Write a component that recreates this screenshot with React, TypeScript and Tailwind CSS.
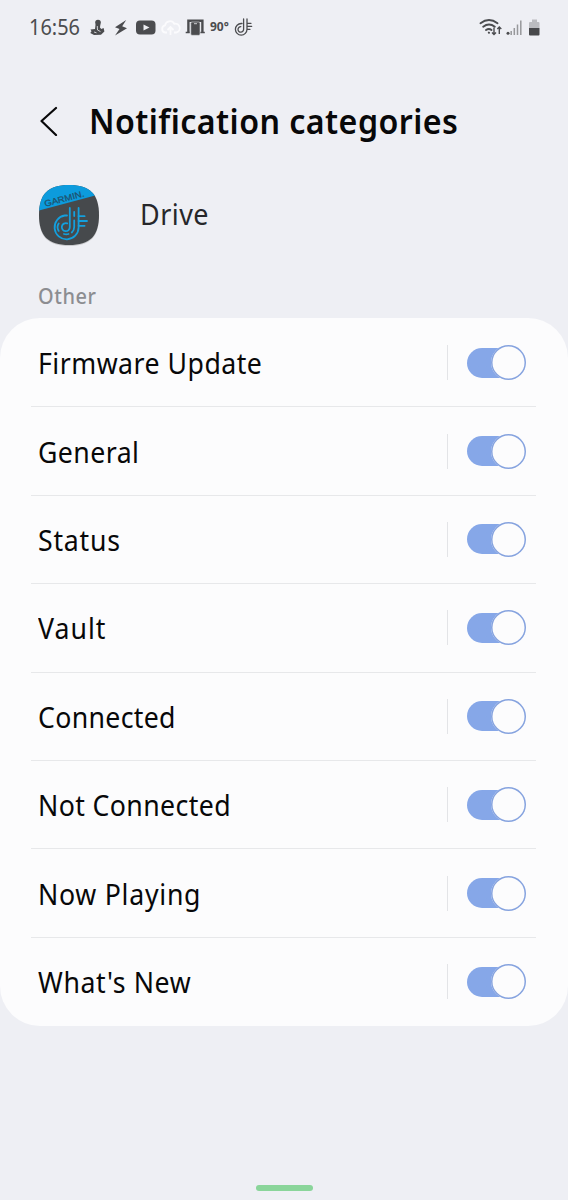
import React from "react";

const categories = [
  { name: "Firmware Update", tracking: "tracking-[0.53px]" },
  { name: "General", tracking: "tracking-[0.48px]" },
  { name: "Status", tracking: "tracking-[0.85px]" },
  { name: "Vault", tracking: "tracking-[1.1px]" },
  { name: "Connected", tracking: "tracking-[0.35px]" },
  { name: "Not Connected", tracking: "tracking-[0.42px]" },
  { name: "Now Playing", tracking: "tracking-[0.8px]" },
  { name: "What's New", tracking: "tracking-[0.67px]" },
];

function NotificationIcons() {
  return (
    <svg width="119" height="24" viewBox="0 0 119 24" fill="none" className="ml-[5px] shrink-0">
      {/* figure */}
      <g fill="#4b4c4f">
        <circle cx="11" cy="7.5" r="2.8" />
        <path d="M8.6 9 13.4 9 13 12.6 14.3 14 16.6 13 17.4 16.5 14 19.7 7 20 3.3 18 4.5 16.2 3.5 14.4 8 14Z" />
      </g>
      <path d="m10.3 11 .2 4 3 1.6M7 17l2.5.8" stroke="#eeeff3" strokeWidth=".8" />
      {/* bolt */}
      <path d="M39.2 5 28 12.2 32.5 14 28 20.5 40 13.2 35.2 11.2Z" fill="#4b4c4f" />
      {/* video */}
      <rect x="49" y="5.5" width="19.5" height="14" rx="4" fill="#4b4c4f" />
      <path d="m56.5 9.5 6 3-6 3Z" fill="#eeeff3" />
      {/* cloud upload */}
      <path d="M80 17.5H78a3.7 3.7 0 0 1 0-7.2 5 5 0 0 1 9.3-1.5 4.4 4.4 0 0 1 2 8.7H87M83.5 20V12m-3 3 3-3 3 3" stroke="#fbfbfd" strokeWidth="1.8" />
      {/* docked phone */}
      <path d="M101.4 17.5V5.7h14v11.8" stroke="#4b4c4f" strokeWidth="2.4" />
      <path d="M98.7 17.6h4m10.5 0h4.6" stroke="#4b4c4f" strokeWidth="1.5" />
      <rect x="103.8" y="7" width="9.2" height="13.3" rx="1.2" fill="#4b4c4f" stroke="#d9dade" strokeWidth=".6" />
      <path d="M107 8.7h3" stroke="#eeeff3" strokeWidth=".8" />
    </svg>
  );
}

function StatusDriveIcon() {
  return (
    <svg width="19" height="22" viewBox="0 0 19 22" fill="none" stroke="#4b4c4f" strokeWidth="1.3" strokeLinecap="round">
      <path d="M8 7.5H7.2a5.8 5.8 0 1 0 5.8 5.8V3M9.6 3v10.3a2.8 2.8 0 1 1-2.8-2.7M13 7.3h4M13 10.3h4.7M13 13.3H16" />
    </svg>
  );
}

function SystemIcons() {
  return (
    <svg width="64" height="24" viewBox="0 0 64 24" fill="none">
      <g stroke="#4b4c4f" strokeWidth="2" strokeLinecap="round">
        <path d="M1.5 8.2q8.5-6.2 17 0M4.2 11.7q5.8-4.5 11.6 0M7 15q3-2 5.5 0" />
        <path d="m9.8 17.6.2.2" />
      </g>
      <path d="M15 12.5v7m-2-2 2 2 2-2M20.3 19v-7m-2 2 2-2 2 2" stroke="#4b4c4f" strokeWidth="1.4" />
      <circle cx="29" cy="18.3" r="1.5" fill="#4b4c4f" />
      <path d="M32.2 16v4M35.3 13v7M38.5 9.5v10.5M41.8 5.5v14.5" stroke="#97989b" strokeWidth="1.5" />
      <path d="M51 7h2V4.5h5V7h1.5q1 0 1 1v5H50V8q0-1 1-1Z" fill="#bbbcc0" />
      <path d="M50 13h10.5v6.5q0 1-1 1H51q-1 0-1-1Z" fill="#47484b" />
    </svg>
  );
}

function AppIcon() {
  return (
    <svg width="64" height="66" viewBox="0 0 64 66" fill="none">
      <defs>
        <clipPath id="app-shape">
          <path d="M32 3C53 3 62 12 62 33S53 63 32 63 2 54 2 33 11 3 32 3Z" />
        </clipPath>
      </defs>
      <path d="M32 4C53 4 62 13 62 34S53 64 32 64 2 55 2 34 11 4 32 4Z" fill="#c9cacd" />
      <g clipPath="url(#app-shape)">
        <path d="M0 0h64v66H0Z" fill="#46494c" />
        <path d="M0 0h64v12L0 29Z" fill="#0c9bdd" />
        <text x="8.2" y="24.8" transform="rotate(-15 8.2 24.8)" fill="#1f526e" fontFamily="Liberation Sans, sans-serif" fontSize="8.6" textLength="41" lengthAdjust="spacingAndGlyphs" stroke="#1f526e" strokeWidth=".25">GARMIN.</text>
        <g stroke="#139fdd" strokeWidth="1.8" strokeLinecap="round">
          <path d="M30 33.5H27.8a12 12 0 1 0 13.8 12V26M32.8 26V45a4 4 0 1 1-2.6-3.6" />
          <path d="M37.2 30v4M37.2 38.5v6.5c0 2.3-.9 4.2-2.4 5.5M27 52q2.3.8 4.5 0M21.7 41.5q-2.4 3.6 0 7.4" />
          <path d="M41.6 34.2h6M41.6 39h8.4M41.6 43.8h6" />
        </g>
      </g>
    </svg>
  );
}

function Toggle() {
  return (
    <button role="switch" aria-checked="true" className="flex h-[36px] w-[59px] items-center">
      <span className="flex h-[30px] w-[59px] items-center justify-end rounded-full bg-gradient-to-r from-[#86a7e8] from-65% to-transparent to-65%">
        <span className="h-[35px] w-[35px] shrink-0 rounded-full bg-[#fcfcfd] shadow-[inset_0_0_0_1.5px_#86a3df]" />
      </span>
    </button>
  );
}

export default function App() {
  return (
    <main className="flex h-[1200px] w-[568px] flex-col overflow-hidden bg-[#eeeff4] font-['Noto_Sans',sans-serif] text-[#080809]">
      <div className="flex h-[54px] items-center pl-[29px] pr-[25px] text-[#4b4c4f]">
        <span className="w-[53px] origin-left scale-x-[0.95] whitespace-nowrap text-[21px] leading-none">16:56</span>
        <NotificationIcons />
        <span className="ml-[4px] w-[24px] whitespace-nowrap text-[12px] font-bold leading-none">90°</span>
        <StatusDriveIcon />
        <div className="ml-auto"><SystemIcons /></div>
      </div>

      <header className="flex h-[132px] items-center pl-[39px]">
        <svg width="20" height="32" viewBox="0 0 20 32" fill="none" stroke="#080809" strokeWidth="2.2" strokeLinecap="round" strokeLinejoin="round">
          <path d="M17 4 2.5 17 17 31" />
        </svg>
        <h1 className="ml-[30px] origin-left scale-x-[0.92] whitespace-nowrap text-[35px] font-semibold leading-none tracking-[0.47px]">Notification categories</h1>
      </header>

      <div className="-mt-[4px] flex h-[66px] items-center pl-[37px]">
        <AppIcon />
        <span className="-mt-[4px] ml-[38.5px] origin-left scale-x-[0.93] text-[29px] leading-none tracking-[0.5px] text-[#26272a]">Drive</span>
      </div>

      <h2 className="flex h-[70px] items-end pb-[9px] pl-[38px] text-[21px] font-medium leading-[26px] text-[#8c8d91]">
        <span className="origin-left scale-x-[0.95] tracking-[0.6px]">Other</span>
      </h2>

      <ul className="h-[707.5px] rounded-[40px] bg-[#fcfcfd] pt-[1px]">
        {categories.map((category, index) => (
          <li key={category.name} className="h-[88.4px] pl-[31px] pr-[32px]">
            <div className={index < 7 ? "flex h-full items-center border-b-[1.5px] border-[#e7e8ea] pl-[7px] pr-[10px]" : "flex h-full items-center pl-[7px] pr-[10px]"}>
              <span className={`origin-left scale-x-[0.92] whitespace-nowrap text-[29px] leading-none ${category.tracking}`}>{category.name}</span>
              <div className="ml-auto flex h-[35px] items-center border-l border-[#e3e4e7] pl-[19px]">
                <Toggle />
              </div>
            </div>
          </li>
        ))}
      </ul>

      <div className="mx-auto mb-[9px] mt-auto h-[6px] w-[57px] rounded-full bg-[#8ad59a]" />
    </main>
  );
}
